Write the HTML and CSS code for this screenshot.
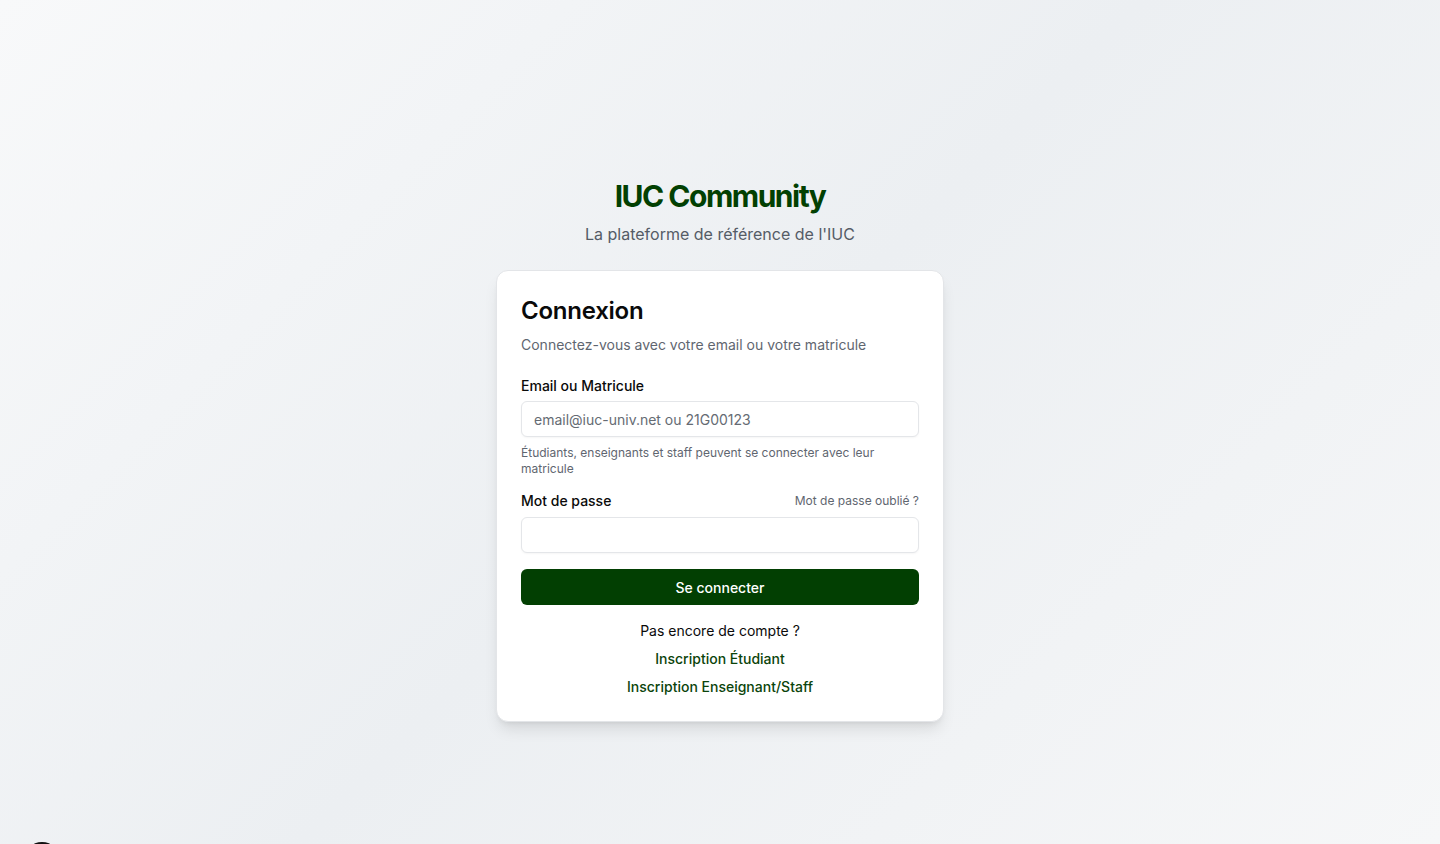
FILE: index.html
```html
<!DOCTYPE html>
<html lang="fr">
<head>
    <title>IUC Community - Connexion</title>
    <meta charset="utf-8">
    <meta name="viewport" content="width=device-width, initial-scale=1.0">
    <link rel="stylesheet" href="styles.css">
</head>
<body>

    <main class="page">
        <div class="brand">
            <h1>IUC Community</h1>
            <p>La plateforme de référence de l'IUC</p>
        </div>

        <section class="card">
            <div class="card-header">
                <h2>Connexion</h2>
                <p>Connectez-vous avec votre email ou votre matricule</p>
            </div>

            <form class="card-content">
                <div class="field">
                    <label for="login">Email ou Matricule</label>
                    <input id="login" type="text" placeholder="email@iuc-univ.net ou 21G00123">
                    <p class="hint">Étudiants, enseignants et staff peuvent se connecter avec leur matricule</p>
                </div>

                <div class="field">
                    <div class="label-row">
                        <label for="password">Mot de passe</label>
                        <a href="#" class="forgot">Mot de passe oublié ?</a>
                    </div>
                    <input id="password" type="password">
                </div>

                <button type="button" class="btn-primary">Se connecter</button>

                <div class="signup">
                    <p>Pas encore de compte ?</p>
                    <a href="#">Inscription Étudiant</a>
                    <a href="#">Inscription Enseignant/Staff</a>
                </div>
            </form>
        </section>
    </main>

    <div class="dev-badge"></div>

</body>
</html>
```

FILE: styles.css
```css
* {
    box-sizing: border-box;
}

body {
    margin: 0;
    min-height: 100vh;
    font-family: Inter, "Noto Sans", sans-serif;
    color: #0a0a0a;
    background: linear-gradient(135deg, #f8f9fa 0%, #eceff2 50%, #f6f7f8 100%);
    overflow: hidden;
}

.page {
    display: flex;
    flex-direction: column;
    align-items: center;
    padding-top: 178px;
}

.brand {
    text-align: center;
    margin-bottom: 24px;
}

.brand h1 {
    margin: 0;
    font-size: 30px;
    line-height: 36px;
    font-weight: 700;
    letter-spacing: -0.05em;
    color: #024002;
}

.brand p {
    margin: 8px 0 0;
    font-size: 16px;
    line-height: 24px;
    color: #555c66;
}

.card {
    width: 448px;
    background-color: white;
    border: 1px solid #e3e5e8;
    border-radius: 12px;
    box-shadow: 0 10px 15px -3px rgba(0, 0, 0, .1), 0 4px 6px -4px rgba(0, 0, 0, .1);
}

.card-header {
    padding: 24px 24px 24px;
}

.card-header h2 {
    margin: 0;
    font-size: 24px;
    line-height: 32px;
    font-weight: 600;
    letter-spacing: -0.01em;
}

.card-header p {
    margin: 8px 0 0;
    font-size: 14px;
    line-height: 20px;
    color: #5f6670;
}

.card-content {
    padding: 0 24px 24px;
    display: flex;
    flex-direction: column;
    gap: 16px;
}

.field {
    display: flex;
    flex-direction: column;
    gap: 8px;
}

.field label {
    font-size: 14px;
    line-height: 14px;
    font-weight: 500;
}

.label-row {
    display: flex;
    justify-content: space-between;
    align-items: center;
    height: 16px;
}

.forgot {
    font-size: 12px;
    line-height: 16px;
    color: #5f6670;
    text-decoration: none;
}

.field input {
    height: 36px;
    width: 100%;
    padding: 4px 12px;
    font-family: inherit;
    font-size: 14px;
    border: 1px solid #e4e6e9;
    border-radius: 6px;
    background: white;
    box-shadow: 0 1px 2px rgba(0, 0, 0, .04);
    outline: none;
}

.field input::placeholder {
    color: #656b73;
}

.hint {
    margin: 0;
    font-size: 12px;
    line-height: 16px;
    color: #5f6670;
}

.btn-primary {
    height: 36px;
    border: none;
    border-radius: 6px;
    background-color: #023f02;
    color: white;
    font-family: inherit;
    font-size: 14px;
    font-weight: 500;
}

.signup {
    display: flex;
    flex-direction: column;
    align-items: center;
    gap: 8px;
    font-size: 14px;
    line-height: 20px;
}

.signup p {
    margin: 0;
}

.signup a {
    color: #0b440b;
    font-weight: 500;
    text-decoration: none;
}

.dev-badge {
    position: fixed;
    left: 24px;
    bottom: -34px;
    width: 36px;
    height: 36px;
    border-radius: 50%;
    background-color: #111;
}
```
